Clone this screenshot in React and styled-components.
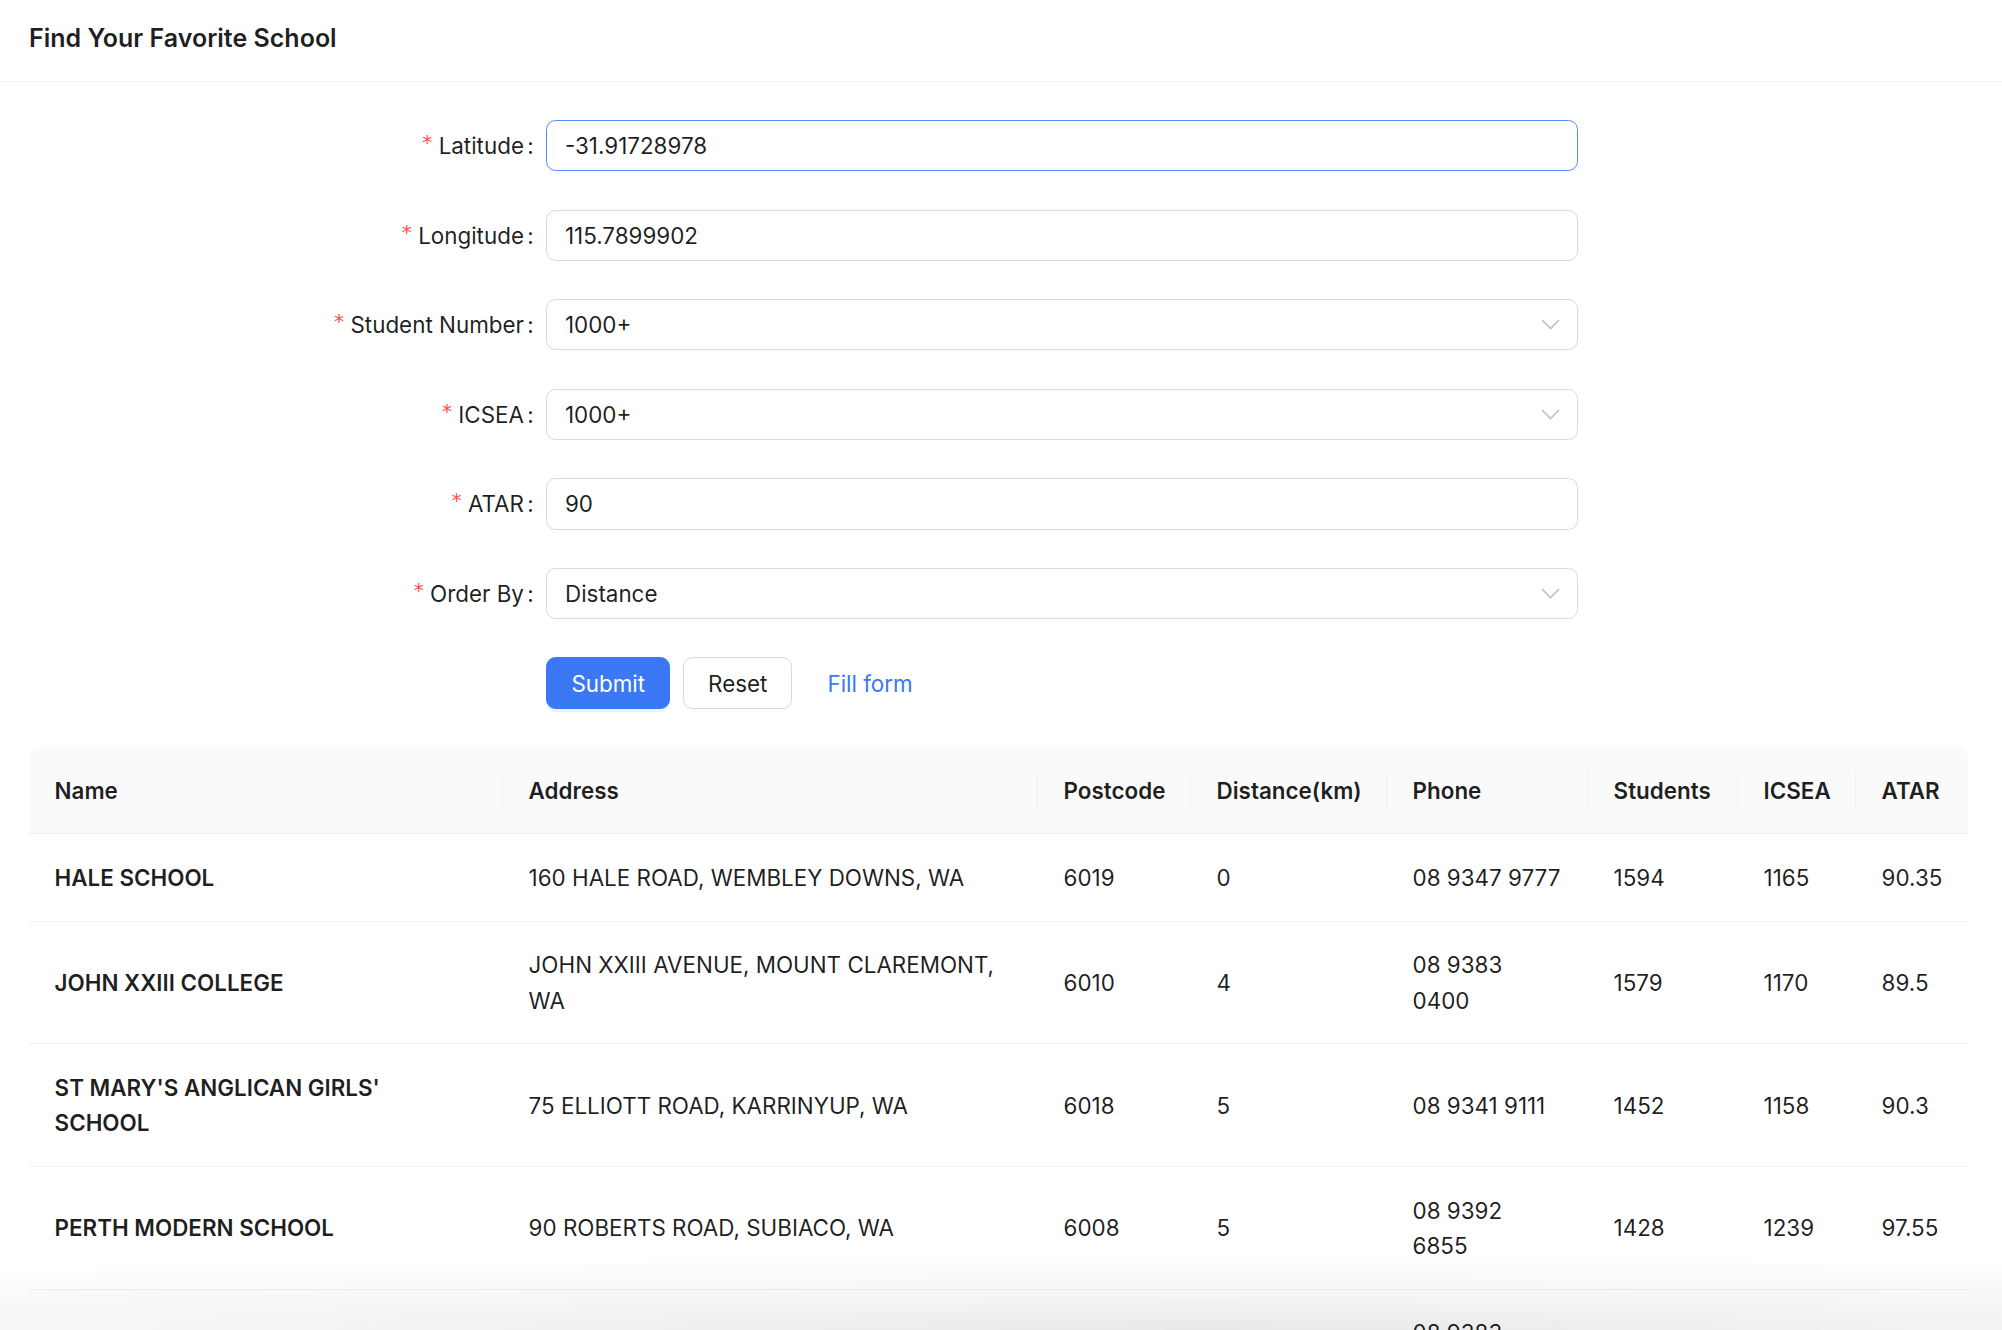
import React from "react";
import styled, { createGlobalStyle } from "styled-components";

const GlobalStyle = createGlobalStyle`
  * {
    box-sizing: border-box;
  }

  body {
    margin: 0;
    background: #fff;
    color: rgba(0, 0, 0, 0.88);
    font-family: Inter, "Noto Sans", sans-serif;
    font-size: 22.4px;
    line-height: 35.2px;
  }
`;

const fields = [
  { label: "Latitude", value: "-31.91728978", focused: true },
  { label: "Longitude", value: "115.7899902" },
  { label: "Student Number", value: "1000+", select: true },
  { label: "ICSEA", value: "1000+", select: true },
  { label: "ATAR", value: "90" },
  { label: "Order By", value: "Distance", select: true },
];

const columns = [
  { title: "Name", key: "name", width: 474 },
  { title: "Address", key: "address", width: 535 },
  { title: "Postcode", key: "postcode", width: 153 },
  { title: "Distance(km)", key: "distance", width: 196 },
  { title: "Phone", key: "phone", width: 201 },
  { title: "Students", key: "students", width: 150 },
  { title: "ICSEA", key: "icsea", width: 118 },
  { title: "ATAR", key: "atar", width: 112 },
];

const schools = [
  {
    name: "HALE SCHOOL",
    address: "160 HALE ROAD, WEMBLEY DOWNS, WA",
    postcode: "6019",
    distance: "0",
    phone: "08 9347 9777",
    students: "1594",
    icsea: "1165",
    atar: "90.35",
  },
  {
    name: "JOHN XXIII COLLEGE",
    address: "JOHN XXIII AVENUE, MOUNT CLAREMONT, WA",
    postcode: "6010",
    distance: "4",
    phone: "08 9383 0400",
    students: "1579",
    icsea: "1170",
    atar: "89.5",
  },
  {
    name: "ST MARY'S ANGLICAN GIRLS' SCHOOL",
    address: "75 ELLIOTT ROAD, KARRINYUP, WA",
    postcode: "6018",
    distance: "5",
    phone: "08 9341 9111",
    students: "1452",
    icsea: "1158",
    atar: "90.3",
  },
  {
    name: "PERTH MODERN SCHOOL",
    address: "90 ROBERTS ROAD, SUBIACO, WA",
    postcode: "6008",
    distance: "5",
    phone: "08 9392 6855",
    students: "1428",
    icsea: "1239",
    atar: "97.55",
  },
  {
    name: "SCOTCH COLLEGE",
    address: "76 SHENTON ROAD, SWANBOURNE, WA",
    postcode: "6010",
    distance: "6",
    phone: "08 9383 6800",
    students: "1410",
    icsea: "1178",
    atar: "88.6",
  },
];

const ChevronDown = () => (
  <svg width="19" height="11" viewBox="0 0 19 11" fill="none">
    <polyline points="1,1 9.5,9.5 18,1" stroke="#bfbfbf" strokeWidth="1.6" />
  </svg>
);

const App = () => {
  return (
    <>
      <GlobalStyle />
      <Header>
        <Title>Find Your Favorite School</Title>
      </Header>

      <Content>
        <Form>
          {fields.map((f) => (
            <FormItem key={f.label}>
              <Label>
                <Required>*</Required>
                {f.label}
                <Colon>:</Colon>
              </Label>
              <Control $focused={f.focused}>
                <span>{f.value}</span>
                {f.select && <ChevronDown />}
              </Control>
            </FormItem>
          ))}

          <FormItem>
            <span />
            <Actions>
              <Button $primary>Submit</Button>
              <Button>Reset</Button>
              <LinkButton>Fill form</LinkButton>
            </Actions>
          </FormItem>
        </Form>

        {/* results */}
        <Table>
          <colgroup>
            {columns.map((c) => (
              <col key={c.key} style={{ width: c.width }} />
            ))}
          </colgroup>
          <thead>
            <tr>
              {columns.map((c) => (
                <Th key={c.key}>{c.title}</Th>
              ))}
            </tr>
          </thead>
          <tbody>
            {schools.map((s) => (
              <tr key={s.name}>
                {columns.map((c) => (
                  <Td key={c.key} $bold={c.key === "name"}>
                    {s[c.key]}
                  </Td>
                ))}
              </tr>
            ))}
          </tbody>
        </Table>
      </Content>

      <BottomShade />
    </>
  );
};

const Header = styled.header`
  height: 82px;
  padding: 19px 29px 0;
  border-bottom: 1px solid #efefef;
`;

const Title = styled.h1`
  margin: 0;
  font-size: 25px;
  line-height: 38px;
  font-weight: 600;
  color: rgba(0, 0, 0, 0.88);
`;

const Content = styled.main`
  padding: 38px 35px 0 29px;
`;

const Form = styled.div`
  display: flex;
  flex-direction: column;
`;

const FormItem = styled.div`
  display: grid;
  grid-template-columns: 517.4px 1032px;
  margin-bottom: 38.4px;
`;

const Label = styled.label`
  display: flex;
  align-items: center;
  justify-content: flex-end;
  height: 51.2px;
  white-space: nowrap;
`;

const Required = styled.span`
  color: #ff4d4f;
  font-family: "DejaVu Sans", sans-serif;
  font-size: 20px;
  margin-right: 6.4px;
  position: relative;
  top: -3px;
`;

const Colon = styled.span`
  margin: 0 12.8px 0 3.2px;
`;

const Control = styled.div`
  display: flex;
  align-items: center;
  justify-content: space-between;
  height: 51.2px;
  padding: 0 17px 0 17.6px;
  border: 1px solid ${({ $focused }) => ($focused ? "#4f8df8" : "#d9d9d9")};
  border-radius: 9.6px;
  background: #fff;
`;

const Actions = styled.div`
  display: flex;
  align-items: center;
  gap: 13px;
`;

const Button = styled.button`
  height: 51.2px;
  padding: 0 24px;
  border-radius: 9.6px;
  font-family: inherit;
  font-size: 22.4px;
  border: 1px solid ${({ $primary }) => ($primary ? "#3b78f6" : "#d9d9d9")};
  background: ${({ $primary }) => ($primary ? "#3b78f6" : "#fff")};
  color: ${({ $primary }) => ($primary ? "#fff" : "rgba(0, 0, 0, 0.88)")};
  box-shadow: ${({ $primary }) =>
    $primary ? "0 3px 0 rgba(5, 145, 255, 0.1)" : "0 3px 0 rgba(0, 0, 0, 0.02)"};
`;

const LinkButton = styled.button`
  height: 51.2px;
  padding: 0 22px;
  border: none;
  background: none;
  font-family: inherit;
  font-size: 22.4px;
  color: #3b78f6;
`;

const Table = styled.table`
  width: 1939px;
  table-layout: fixed;
  border-collapse: separate;
  border-spacing: 0;
`;

const Th = styled.th`
  position: relative;
  padding: 25.6px;
  text-align: left;
  font-weight: 600;
  background: #fafafa;
  border-bottom: 1px solid #f0f0f0;

  &:first-child {
    border-top-left-radius: 12.8px;
  }

  &:last-child {
    border-top-right-radius: 12.8px;
  }

  &:not(:last-child)::before {
    content: "";
    position: absolute;
    right: 0;
    top: 50%;
    width: 1px;
    height: 36px;
    transform: translateY(-50%);
    background: #f0f0f0;
  }
`;

const Td = styled.td`
  padding: 25.6px;
  border-bottom: 1px solid #f0f0f0;
  font-weight: ${({ $bold }) => ($bold ? 600 : 400)};
  overflow-wrap: break-word;
`;

const BottomShade = styled.div`
  position: fixed;
  left: 0;
  right: 0;
  bottom: 0;
  height: 75px;
  pointer-events: none;
  background: radial-gradient(
    ellipse 110% 100% at 60% 100%,
    rgba(0, 0, 0, 0.085) 0%,
    rgba(0, 0, 0, 0.04) 45%,
    rgba(0, 0, 0, 0) 100%
  );
`;

export default App;
